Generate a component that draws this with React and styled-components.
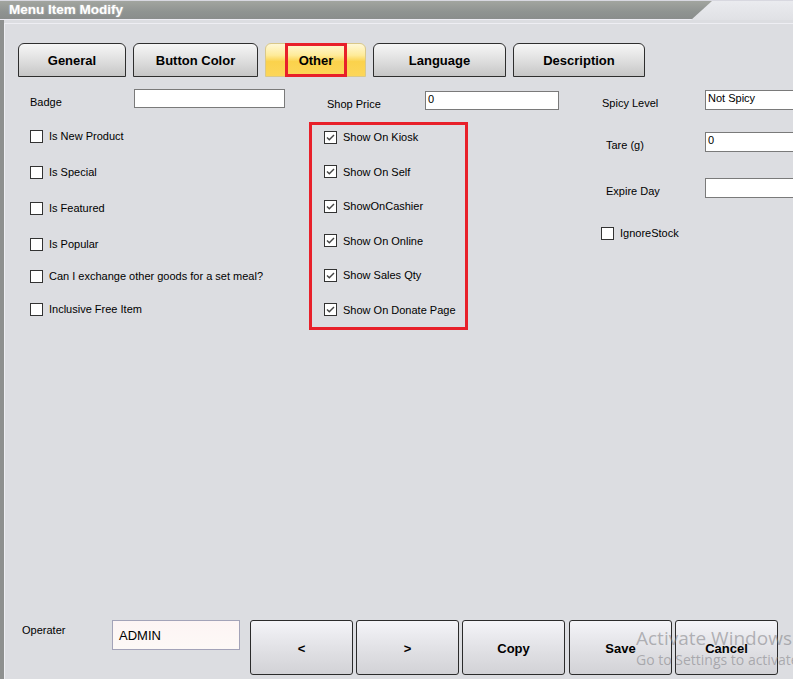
import React from "react";
import styled, { createGlobalStyle } from "styled-components";

const GlobalStyle = createGlobalStyle`
  html, body {
    margin: 0;
    padding: 0;
    background: #dcdde1;
  }
  * {
    box-sizing: border-box;
  }
`;

const leftChecks = [
  { label: "Is New Product", top: 20 },
  { label: "Is Special", top: 20 },
  { label: "Is Featured", top: 20 },
  { label: "Is Popular", top: 20 },
  { label: "Can I exchange other goods for a set meal?", top: 16 },
  { label: "Inclusive Free Item", top: 17 },
];

const showChecks = [
  "Show On Kiosk",
  "Show On Self",
  "ShowOnCashier",
  "Show On Online",
  "Show Sales Qty",
  "Show On Donate Page",
];

const tabs = [
  { label: "General", width: 108 },
  { label: "Button Color", width: 125 },
  { label: "Other", width: 101, active: true },
  { label: "Language", width: 133 },
  { label: "Description", width: 132 },
];

const CheckMark = () => (
  <svg width="11" height="11" viewBox="0 0 11 11">
    <path d="M2 5.5 L4.3 7.8 L9 3" fill="none" stroke="#444" strokeWidth="1.4" />
  </svg>
);

const CheckItem = ({ label, checked, top }) => (
  <CheckRow $top={top}>
    <Box>{checked ? <CheckMark /> : null}</Box>
    <SmallText>{label}</SmallText>
  </CheckRow>
);

export default function App() {
  return (
    <Window>
      <GlobalStyle />
      <TitleBar>
        <TitleShape>
          <TitleText>Menu Item Modify</TitleText>
        </TitleShape>
      </TitleBar>
      <Main>
        <Panel>
          <TabRow>
            {tabs.map((t) => (
              <Tab key={t.label} $width={t.width} $active={t.active}>
                {t.active ? <Marked>{t.label}</Marked> : t.label}
              </Tab>
            ))}
          </TabRow>

          <Form>
            <LeftColumn>
              <Field>
                <FieldLabel $width={104}>Badge</FieldLabel>
                <TextBox $width={151} $height={19} />
              </Field>
              {leftChecks.map((c) => (
                <CheckItem key={c.label} label={c.label} top={c.top} />
              ))}
            </LeftColumn>

            <MiddleColumn>
              <Field>
                <FieldLabel $width={116} $indent={18}>Shop Price</FieldLabel>
                <TextBox $width={134} $height={19}>0</TextBox>
              </Field>
              <RedBox>
                {showChecks.map((label, i) => (
                  <CheckItem key={label} label={label} checked top={i === 0 ? 0 : 18.6} />
                ))}
              </RedBox>
            </MiddleColumn>

            <RightColumn>
              <Field>
                <FieldLabel $width={104} $indent={1}>Spicy Level</FieldLabel>
                <TextBox $width={100} $height={20}>Not Spicy</TextBox>
              </Field>
              <Field $top={22}>
                <FieldLabel $width={104} $indent={5}>Tare (g)</FieldLabel>
                <TextBox $width={100} $height={20}>0</TextBox>
              </Field>
              <Field $top={26}>
                <FieldLabel $width={104} $indent={5}>Expire Day</FieldLabel>
                <TextBox $width={100} $height={20} />
              </Field>
              <CheckItem label="IgnoreStock" top={27} />
            </RightColumn>
          </Form>

          <Footer>
            <OperatorLabel>Operater</OperatorLabel>
            <OperatorBox>ADMIN</OperatorBox>
            <ButtonGroup>
              <ActionButton>&lt;</ActionButton>
              <ActionButton>&gt;</ActionButton>
              <ActionButton>Copy</ActionButton>
              <ActionButton $gap={4}>Save</ActionButton>
              <ActionButton>Cancel</ActionButton>
            </ButtonGroup>
          </Footer>
        </Panel>
      </Main>

      <Watermark>
        <WatermarkTitle>Activate Windows</WatermarkTitle>
        <WatermarkSub>Go to Settings to activate Windows.</WatermarkSub>
      </Watermark>
    </Window>
  );
}

const Window = styled.div`
  position: relative;
  width: 793px;
  height: 679px;
  overflow: hidden;
  display: flex;
  flex-direction: column;
  background: #dcdde1;
  font-family: "Liberation Sans", Arial, sans-serif;
  color: #000;
`;

const TitleBar = styled.div`
  height: 20px;
  flex-shrink: 0;
  background: linear-gradient(#eaebef, #e0e1e5);
  border-top: 1px solid #d8d8e0;
`;

const TitleShape = styled.div`
  width: 712px;
  height: 19px;
  display: flex;
  align-items: center;
  background: linear-gradient(#a2a59f, #8f9391 60%, #8a8d8c);
  border-bottom: 1px solid #ecebf2;
  clip-path: polygon(0 0, 100% 0, calc(100% - 21px) 100%, 0 100%);
`;

const TitleText = styled.span`
  margin-left: 9px;
  margin-top: -2px;
  font-size: 13.5px;
  font-weight: bold;
  color: #fff;
  text-shadow: 0 0 2px rgba(255, 255, 255, 0.5);
`;

const Main = styled.div`
  flex: 1;
  display: flex;
  border-left: 4px solid #8e908f;
  padding-top: 3px;
`;

const Panel = styled.div`
  flex: 1;
  display: flex;
  flex-direction: column;
  border-top: 1px solid #eeeef3;
  border-left: 1px solid #eeeef3;
`;

const TabRow = styled.div`
  display: flex;
  gap: 7px;
  padding: 19px 0 0 13px;
`;

const Tab = styled.div`
  width: ${(p) => p.$width}px;
  height: 34px;
  display: flex;
  align-items: center;
  justify-content: center;
  font-size: 13px;
  font-weight: bold;
  border: 1px solid ${(p) => (p.$active ? "#d9c88a" : "#2e2e2e")};
  border-radius: 6px 6px 0 0;
  background: ${(p) =>
    p.$active
      ? "linear-gradient(#fff8d6 0%, #feeb9a 35%, #fbd24c 55%, #fcd659 100%)"
      : "linear-gradient(#f6f6f6 0%, #e2e2e2 45%, #c6c6c6 100%)"};
`;

const Marked = styled.span`
  height: 34px;
  width: 62px;
  margin-left: 1px;
  display: flex;
  align-items: center;
  justify-content: center;
  border: 3px solid #e8202a;
`;

const Form = styled.div`
  display: flex;
  align-items: flex-start;
  padding-top: 12px;
`;

const LeftColumn = styled.div`
  width: 304px;
  padding-left: 25px;
  display: flex;
  flex-direction: column;
`;

const MiddleColumn = styled.div`
  width: 159px;
  margin-top: 2px;
  display: flex;
  flex-direction: column;
`;

const RightColumn = styled.div`
  margin-left: 133px;
  margin-top: 1px;
  display: flex;
  flex-direction: column;
`;

const Field = styled.div`
  display: flex;
  align-items: center;
  margin-top: ${(p) => p.$top || 0}px;
`;

const FieldLabel = styled.span`
  width: ${(p) => p.$width}px;
  flex-shrink: 0;
  padding-left: ${(p) => p.$indent || 0}px;
  padding-top: 6px;
  font-size: 11px;
  white-space: nowrap;
`;

const TextBox = styled.div`
  width: ${(p) => p.$width}px;
  height: ${(p) => p.$height}px;
  flex-shrink: 0;
  background: #fff;
  border: 1px solid #7a7a7a;
  font-size: 11px;
  padding: 1px 0 0 2px;
  white-space: nowrap;
`;

const RedBox = styled.div`
  margin-top: 12px;
  height: 208px;
  border: 3px solid #e8202a;
  padding: 4px 0 0 12px;
  display: flex;
  flex-direction: column;
`;

const CheckRow = styled.div`
  height: 16px;
  display: flex;
  align-items: center;
  gap: 6px;
  margin-top: ${(p) => p.$top || 0}px;
  white-space: nowrap;
`;

const Box = styled.span`
  width: 13px;
  height: 13px;
  flex-shrink: 0;
  display: flex;
  align-items: center;
  justify-content: center;
  background: #fff;
  border: 1px solid #333;
`;

const SmallText = styled.span`
  font-size: 11px;
`;

const Footer = styled.div`
  margin-top: auto;
  display: flex;
  align-items: flex-start;
  padding: 0 0 4px 17px;
`;

const OperatorLabel = styled.span`
  width: 90px;
  margin-top: 4px;
  font-size: 11px;
`;

const OperatorBox = styled.div`
  width: 128px;
  height: 30px;
  display: flex;
  align-items: center;
  padding-left: 6px;
  font-size: 13px;
  background: linear-gradient(#fdf4f4, #fdf9f6);
  border: 1px solid #a3a3b8;
`;

const ButtonGroup = styled.div`
  display: flex;
  margin-left: 10px;
`;

const ActionButton = styled.div`
  width: 103px;
  height: 55px;
  margin-left: ${(p) => (p.$gap !== undefined ? p.$gap : 3)}px;
  &:first-child {
    margin-left: 0;
  }
  display: flex;
  align-items: center;
  justify-content: center;
  padding-top: 2px;
  font-size: 13px;
  font-weight: bold;
  border: 1px solid #2b2b2b;
  border-radius: 3px;
  background: linear-gradient(#f4f4f8, #e2e2e6 50%, #d2d2d6);
`;

const Watermark = styled.div`
  position: absolute;
  left: 636px;
  top: 626px;
  white-space: nowrap;
  pointer-events: none;
  font-family: "Open Sans", "DejaVu Sans", sans-serif;
  color: rgba(125, 125, 130, 0.55);
`;

const WatermarkTitle = styled.div`
  font-size: 19px;
  line-height: 24px;
`;

const WatermarkSub = styled.div`
  font-size: 14px;
  line-height: 20px;
`;
